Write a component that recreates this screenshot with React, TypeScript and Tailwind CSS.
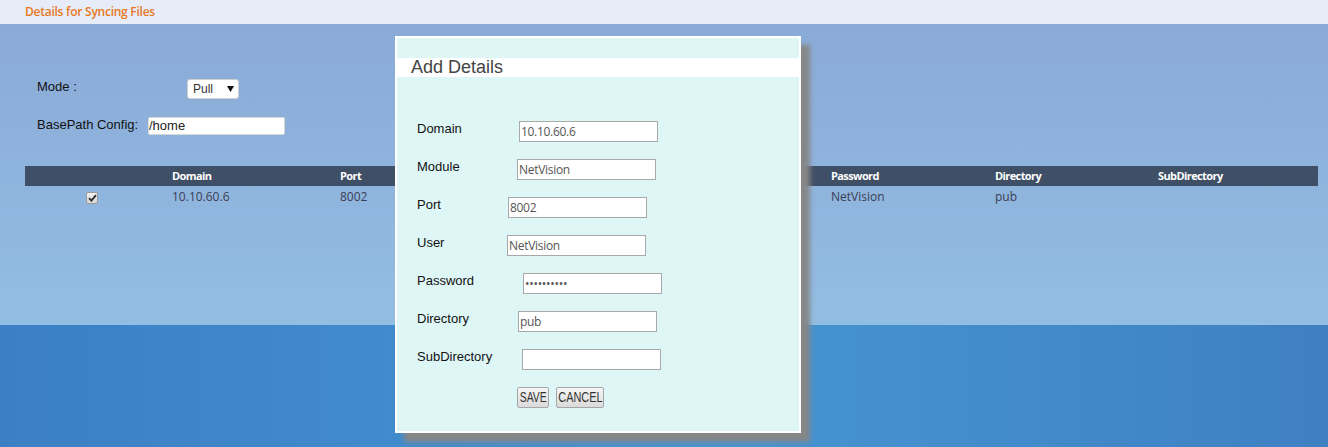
import React from "react";

const sans = "font-['Open_Sans',sans-serif]";
const arial = "font-['Liberation_Sans',Arial,sans-serif]";

const fields = [
  { label: "Domain", value: "10.10.60.6", labelW: "w-[102px]" },
  { label: "Module", value: "NetVision", labelW: "w-[100px]" },
  { label: "Port", value: "8002", labelW: "w-[91px]" },
  { label: "User", value: "NetVision", labelW: "w-[90px]" },
  { label: "Password", value: "NetVision1", labelW: "w-[106px]", type: "password" },
  { label: "Directory", value: "pub", labelW: "w-[101px]" },
  { label: "SubDirectory", value: "", labelW: "w-[105px]" },
];

const columns = ["Domain", "Port", "Module", "User", "Password", "Directory", "SubDirectory"];
const row = ["10.10.60.6", "8002", "NetVision", "NetVision", "NetVision", "pub", ""];

function Checkbox() {
  return (
    <span className="flex h-[12px] w-[12px] items-center justify-center rounded-[2px] border border-[#9a9a9a] bg-[linear-gradient(180deg,#f2f2f2,#d6d6d6)]">
      <svg width="9" height="8" viewBox="0 0 9 8">
        <path d="M1 4.2 L3.4 6.6 L8 1.2" fill="none" stroke="#2b2b2b" strokeWidth="1.8" />
      </svg>
    </span>
  );
}

function AddDetailsModal() {
  return (
    <div className="absolute left-[395px] top-[36px] h-[397px] w-[406px] border-2 border-white bg-[#dff6f7] pt-[20px] shadow-[9px_9px_5px_#878787]">
      <div className={`h-[19px] bg-white pl-[14px] text-[18px] leading-[19px] text-[#444] ${arial}`}>
        Add Details
      </div>

      <div className="mt-[44px] flex flex-col gap-[17px] pl-[20px]">
        {fields.map((f) => (
          <div key={f.label} className="flex h-[21px] items-start">
            <span className={`${f.labelW} shrink-0 text-[13px] leading-[15px] text-[#111] ${arial}`}>
              {f.label}
            </span>
            <input
              readOnly
              type={f.type ?? "text"}
              defaultValue={f.value}
              className={`h-[21px] w-[139px] border border-[#a9a9a9] bg-white px-[1px] text-[12px] tracking-[-0.3px] text-[#555] outline-none ${sans}`}
            />
          </div>
        ))}

        {/* buttons */}
        <div className="ml-[100px] flex h-[21px] gap-[7px]">
          <button className={`flex h-[21px] w-[32px] items-center justify-center overflow-hidden rounded-[2px] border border-[#a6a6a6] bg-[linear-gradient(180deg,#f6f6f6,#dadada)] text-[14px] text-[#333] ${arial}`}>
            <span className="inline-block scale-x-[0.74]">SAVE</span>
          </button>
          <button className={`flex h-[21px] w-[48px] items-center justify-center overflow-hidden rounded-[2px] border border-[#a6a6a6] bg-[linear-gradient(180deg,#f6f6f6,#dadada)] text-[14px] text-[#333] ${arial}`}>
            <span className="inline-block scale-x-[0.78]">CANCEL</span>
          </button>
        </div>
      </div>
    </div>
  );
}

export default function App() {
  return (
    <div className="relative flex min-h-screen flex-col overflow-hidden">
      {/* top bar */}
      <div className={`h-[24px] bg-[#e6ecf8] pl-[25px] text-[12px] font-semibold leading-[24px] tracking-[-0.25px] text-[#e9781e] ${sans}`}>
        Details for Syncing Files
      </div>

      {/* light panel */}
      <div className="h-[301px] bg-[linear-gradient(180deg,#8aaad7,#93bee3)]">
        <div className="ml-[37px] mt-[55px] flex h-[20px] items-start">
          <span className={`w-[150px] text-[13px] leading-[15px] text-[#111] ${arial}`}>Mode :</span>
          <div className={`flex h-[20px] w-[52px] items-center rounded-[3px] border border-[#cfcfcf] bg-white pl-[5px] text-[12px] text-[#333] ${arial}`}>
            <span>Pull</span>
            <svg className="ml-[14px]" width="7" height="6" viewBox="0 0 7 6">
              <path d="M0 0 H7 L3.5 6 Z" fill="#111" />
            </svg>
          </div>
        </div>

        <div className="ml-[37px] mt-[18px] flex h-[18px] items-start">
          <span className={`w-[111px] text-[13px] leading-[15px] text-[#111] ${arial}`}>BasePath Config:</span>
          <input
            readOnly
            defaultValue="/home"
            className={`h-[18px] w-[137px] rounded-[2px] border border-[#d8d8d8] bg-white px-0 text-[13px] text-[#222] outline-none ${arial}`}
          />
        </div>

        {/* table */}
        <div className={`ml-[25px] mr-[10px] mt-[31px] ${sans}`}>
          <div className="grid h-[20px] grid-cols-[134px_168px_164px_164px_163px_164px_163px_1fr] bg-[#3f4f66] text-[11px] font-bold leading-[20px] tracking-[-0.6px] text-white">
            <span />
            {columns.map((c) => (
              <span key={c} className="pl-[13px]">
                {c}
              </span>
            ))}
          </div>
          <div className="grid h-[21px] grid-cols-[134px_168px_164px_164px_163px_164px_163px_1fr] text-[12px] leading-[21px] text-[#3b3d52]">
            <span className="flex items-center justify-center pt-[3px]">
              <Checkbox />
            </span>
            {row.map((v, i) => (
              <span key={i} className="pl-[13px]">
                {v}
              </span>
            ))}
          </div>
        </div>
      </div>

      {/* dark panel */}
      <div className="flex-1 bg-[linear-gradient(90deg,#3c7fc4,#4695d3_55%,#3f80c3)]" />

      <AddDetailsModal />
    </div>
  );
}
